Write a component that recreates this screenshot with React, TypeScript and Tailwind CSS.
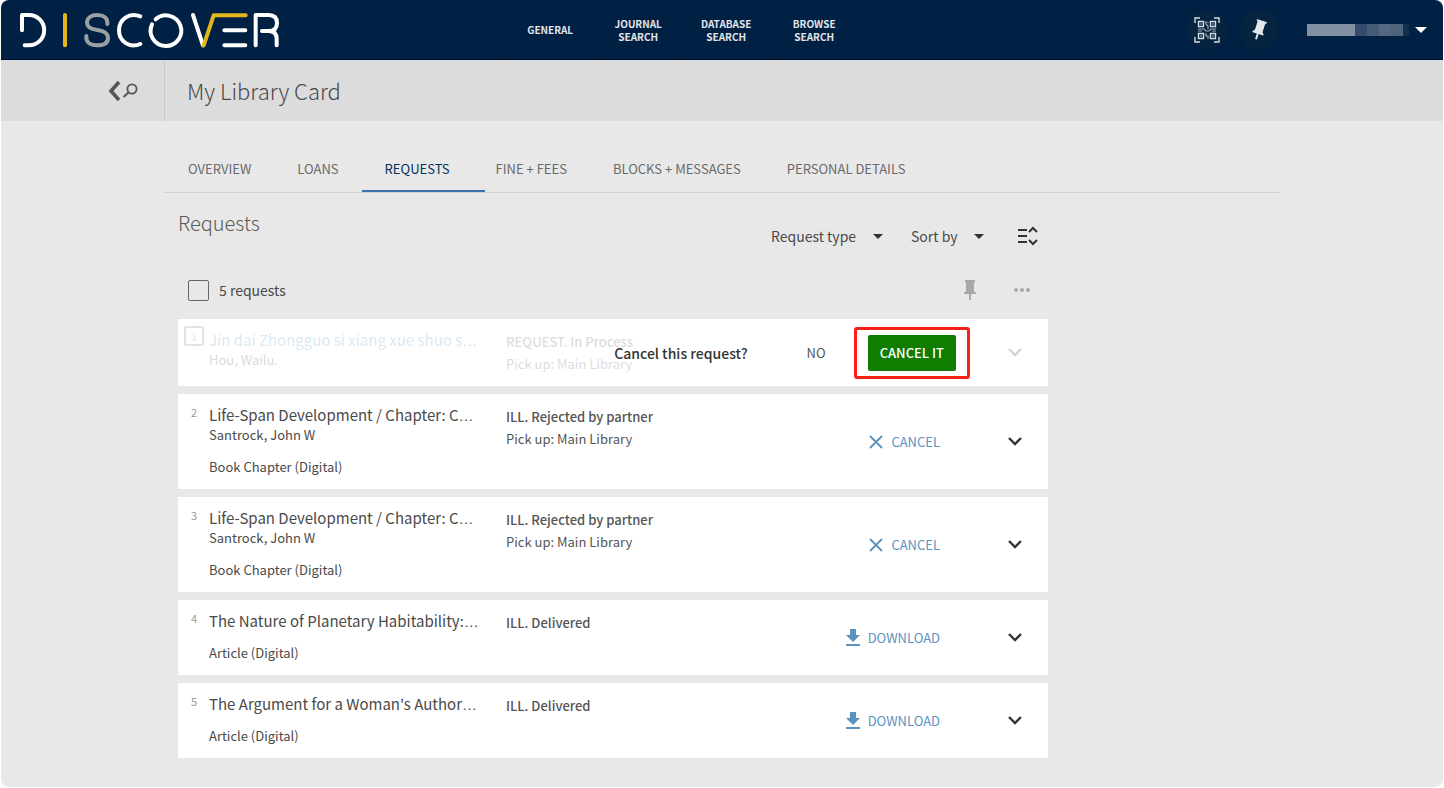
import React from 'react';

interface LibraryRequest {
  id: number;
  title: string;
  author?: string;
  type?: string;
  status: string;
  pickup?: string;
  action: 'cancel' | 'download' | 'confirm';
}

const navItems = [['General'], ['Journal', 'Search'], ['Database', 'Search'], ['Browse', 'Search']];

const tabs = ['Overview', 'Loans', 'Requests', 'Fine + Fees', 'Blocks + Messages', 'Personal Details'];

const requests: LibraryRequest[] = [
  { id: 1, title: 'Jin dai Zhongguo si xiang xue shuo s', author: 'Hou, Wailu.', status: 'REQUEST. In Process', pickup: 'Pick up: Main Library', action: 'confirm' },
  { id: 2, title: 'Life-Span Development / Chapter: C', author: 'Santrock, John W', type: 'Book Chapter (Digital)', status: 'ILL. Rejected by partner', pickup: 'Pick up: Main Library', action: 'cancel' },
  { id: 3, title: 'Life-Span Development / Chapter: C', author: 'Santrock, John W', type: 'Book Chapter (Digital)', status: 'ILL. Rejected by partner', pickup: 'Pick up: Main Library', action: 'cancel' },
  { id: 4, title: 'The Nature of Planetary Habitability:', type: 'Article (Digital)', status: 'ILL. Delivered', action: 'download' },
  { id: 5, title: "The Argument for a Woman's Author", type: 'Article (Digital)', status: 'ILL. Delivered', action: 'download' },
];

const Logo = () => (
  <svg width="264" height="40" viewBox="54 30 792 120" fill="none" stroke="#fff" strokeWidth="12" strokeLinecap="round" strokeLinejoin="round" role="img" aria-label="Discover">
    <path d="M66 91V45H87a45.5 45.5 0 0 1 0 91H74" />
    <path d="M195 45V136" stroke="#e3b71c" />
    <path d="M322 72V68c0-14-11-23-30-23s-31 9-31 23c0 13 9 19 31 22s32 9 32 23c0 15-12 23-32 23s-33-9-33-23v-5" stroke="#9b9fa6" />
    <path d="M421 49C387 35 357 59 357 91s30 55 64 41" />
    <path d="M467 58a46 46 0 1 1-11 15" />
    <path d="M579 45L609 136" />
    <path d="M673 91H736M673 136H736" />
    <path d="M611 136L641 46H737" stroke="#e3b71c" />
    <path d="M767 136V45H806q25 0 25 24t-25 24H786M806 93q24 0 24 24V136" />
  </svg>
);

const QrIcon = () => (
  <svg width="26" height="26" viewBox="0 0 26 26" fill="none" stroke="#d5dae0" strokeWidth="1.4" aria-hidden="true">
    <path d="M1 6V1H6M20 1H25V6M25 20V25H20M6 25H1V20" />
    <path d="M4.500 4.500h5v5h-5zM16.500 4.500h5v5h-5zM4.500 16.500h5v5h-5zM16.500 16.500h5v5h-5z" />
    <path d="M6.500 7h1M18.500 7h1M6.500 19h1M18.500 19h1" />
    <path d="M12 4v3l2 2v3M4 12h6l2 2h3l2-2h5M4 14h4M12 16v3h2v3M18 14h4M14 5v1" stroke="#9eaab8" strokeWidth="1.2" />
  </svg>
);

const PinIcon = ({ className }: { className: string }) => (
  <svg width="12" height="20" viewBox="0 0 12 20" fill="currentColor" className={className} aria-hidden="true">
    <path d="M1 0H11V2H10V11L12 13V14H7V20H5V14H0V13L2 11V2H1Z" />
  </svg>
);

const Caret = ({ className }: { className: string }) => (
  <svg width="10" height="5" viewBox="0 0 10 5" fill="currentColor" className={className} aria-hidden="true">
    <path d="M0 0H10L5 5Z" />
  </svg>
);

const Chevron = () => (
  <svg width="14" height="9" viewBox="0 0 14 9" fill="none" stroke="currentColor" strokeWidth="2.4" aria-hidden="true">
    <path d="M1 1L7 7L13 1" />
  </svg>
);

const Header = () => (
  <header className="flex h-[60px] items-stretch border-b border-[#000f2b] bg-[#002044] text-white">
    <div className="flex w-[35%] items-center pl-[17px]">
      <a href="#home"><Logo /></a>
    </div>
    <nav className="flex">
      {navItems.map((words) => (
        <a key={words[0]} href="#nav" className="flex w-22 flex-col items-center justify-center border-l border-[#001c3c] text-[10px] leading-[13px] font-bold uppercase text-[#e2e5e9]">
          {words.map((word) => <span key={word}>{word}</span>)}
        </a>
      ))}
    </nav>
    <div className="ml-auto flex items-center pr-4">
      <button aria-label="Scan QR code" className="flex size-10 items-center justify-center rounded-full bg-[#06243f]">
        <QrIcon />
      </button>
      <button aria-label="Saved items" className="ml-3 flex size-10 items-center justify-center rounded-full bg-[#06243f]">
        <PinIcon className="rotate-[18deg] text-[#e4e7ea]" />
      </button>
      <button aria-label="Account menu" className="ml-7 flex items-center gap-1.5">
        <span className="flex h-3">
          <span className="w-12 bg-[#8190a3]" />
          <span className="w-3 bg-[#344d6c]" />
          <span className="w-3 bg-[#465b76]" />
          <span className="w-3 bg-[#56687f]" />
          <span className="w-3 bg-[#4f637c]" />
          <span className="w-1.5 bg-[#122f50]" />
        </span>
        <Caret className="h-1.5 w-3 text-white" />
      </button>
    </div>
  </header>
);

const TitleBar = () => (
  <div className="flex h-[61px] bg-[#dcdcdc]">
    <div className="flex w-[164px] items-center justify-end border-r border-[#c8c8c8] pr-[26px]">
      <button aria-label="Back to search" className="text-[#555]">
        <svg width="30" height="20" viewBox="0 0 30 20" fill="none" stroke="currentColor" aria-hidden="true">
          <path d="M11 1L3 10L11 19" strokeWidth="3.6" />
          <circle cx="24" cy="8" r="4.6" strokeWidth="1.8" />
          <path d="M20.500 11.500L15.500 16" strokeWidth="2" />
        </svg>
      </button>
    </div>
    <h1 className="flex items-center pl-[22px] text-[22px] font-light text-[#4a4a4a]">My Library Card</h1>
  </div>
);

const RowAction = ({ action }: { action: 'cancel' | 'download' }) => (
  <button className="flex items-center gap-2 text-[13px] leading-5 text-[#5c92be] uppercase">
    {action === 'cancel' ? (
      <svg width="14" height="14" viewBox="0 0 14 14" fill="none" stroke="currentColor" strokeWidth="1.8" aria-hidden="true">
        <path d="M1 1L13 13M13 1L1 13" />
      </svg>
    ) : (
      <svg width="14" height="18" viewBox="0 0 14 18" fill="currentColor" aria-hidden="true">
        <path d="M4 0H10V6H14L7 13L0 6H4ZM0 15H14V17H0Z" />
      </svg>
    )}
    {action}
  </button>
);

const CancelConfirm = () => (
  <div className="absolute inset-y-0 right-[78px] flex items-center">
    <span className="text-sm font-medium text-[#333]">Cancel this request?</span>
    <button className="ml-[59px] text-[13px] text-[#555]">NO</button>
    <div className="ml-7 rounded-[3px] border-3 border-[#fb2116] px-[11px] py-[5px]">
      <button className="h-9 rounded-xs bg-[#107c00] px-3 text-[13px] font-medium text-white">CANCEL IT</button>
    </div>
  </div>
);

const RequestRow = ({ request }: { request: LibraryRequest }) => {
  const faded = request.action === 'confirm';
  return (
    <li className="relative flex bg-white text-[13px] text-[#4a4a4a]">
      <div className={faded ? 'flex min-w-0 flex-1 opacity-20' : 'flex min-w-0 flex-1'}>
        <div className={faded ? 'w-[31px] shrink-0 pl-1.5 pt-[7px]' : 'w-[31px] shrink-0 pl-[13px] pt-2.5'}>
          {faded ? (
            <label className="relative flex size-5 items-center justify-center text-[11px] leading-4 text-[#999]">
              <input type="checkbox" aria-label="Select request 1" className="absolute inset-0 appearance-none rounded-xs border-2 border-[#777]" />
              {request.id}
            </label>
          ) : (
            <span className="block text-[11px] leading-4 text-[#999]">{request.id}</span>
          )}
        </div>
        <div className={faded ? 'w-[297px] shrink-0 pt-2.5 pb-4' : 'w-[297px] shrink-0 pt-2.5 pb-3'}>
          <h3 className={faded ? 'h-[21px] text-[15px] leading-[21px] whitespace-nowrap text-[#4a92cc]' : 'h-[21px] text-[15px] leading-[21px] whitespace-nowrap'}>
            {request.title}<span className="font-['Liberation_Sans'] text-[#4a4a4a]">…</span>
          </h3>
          {request.author && <p className="leading-5">{request.author}</p>}
          {request.type && <p className="mt-3 leading-5">{request.type}</p>}
        </div>
        <div className="pt-3 leading-[22px] text-[#555]">
          <p className="font-medium">{request.status}</p>
          {request.pickup && <p>{request.pickup}</p>}
        </div>
      </div>
      {request.action === 'confirm' ? <CancelConfirm /> : <RowAction action={request.action} />}
      <button aria-label="Expand request" className={faded ? 'ml-[68px] mr-[26px] text-[#d3d3d3]' : 'ml-[68px] mr-[26px] text-[#333]'}>
        <Chevron />
      </button>
    </li>
  );
};

const FilterSelect = ({ label }: { label: string }) => (
  <div className="relative flex items-center">
    <select aria-label={label} className="appearance-none bg-transparent pr-[26px] text-sm leading-6 text-[#4a4a4a]">
      <option>{label}</option>
    </select>
    <Caret className="pointer-events-none absolute right-0 text-[#333]" />
  </div>
);

export default function App() {
  return (
    <div className="min-h-screen bg-white px-px pb-px font-['Noto_Sans_CJK_SC',sans-serif] flex flex-col">
      <div className="flex-1 overflow-hidden rounded-lg bg-[#e8e8e8]">
        <Header />
        <TitleBar />
        <main className="ml-[162px] max-w-[1118px]">
          <nav className="flex h-[72px] items-stretch border-b border-[#d2d2d2] pl-0.5">
            {tabs.map((tab) => (
              <a
                key={tab}
                href="#tab"
                className={
                  tab === 'Requests'
                    ? "relative flex items-center px-[23px] pt-6 text-[13px] uppercase text-[#00305c] after:absolute after:-right-3 after:bottom-0 after:left-0 after:h-0.5 after:bg-[#3a74a8] after:content-['']"
                    : 'flex items-center px-[23px] pt-6 text-[13px] uppercase text-[#6a6a6a]'
                }
              >
                {tab}
              </a>
            ))}
          </nav>

          <section className="ml-[15px] max-w-[870px]">
            <div className="flex h-[66px] items-start justify-between">
              <h2 className="pt-3.5 text-[20px] leading-8 font-light text-[#5a5a5a]">Requests</h2>
              <div className="mr-2.5 flex items-center gap-7 pt-[31px]">
                <FilterSelect label="Request type" />
                <FilterSelect label="Sort by" />
                <button aria-label="Expand all" className="ml-1.5 text-[#333]">
                  <svg width="20" height="20" viewBox="0 0 20 20" fill="none" stroke="currentColor" strokeWidth="2" aria-hidden="true">
                    <path d="M0 4H9M0 10H9M0 16H9M11 6L15 2L19 6M11 14L15 18L19 14" />
                  </svg>
                </button>
              </div>
            </div>

            <div className="flex h-[60px] items-center pt-0.5 pl-2.5">
              <label className="flex items-center gap-2.5 text-sm text-[#4a4a4a]">
                <input type="checkbox" className="size-[21px] appearance-none rounded-xs border border-[#666]" />
                5 requests
              </label>
              <button aria-label="Save selected" className="ml-auto mr-[38px]"><PinIcon className="text-[#a8a8a8]" /></button>
              <button aria-label="More actions" className="mr-[18px] text-[#a8a8a8]">
                <svg width="16" height="4" viewBox="0 0 16 4" fill="currentColor" aria-hidden="true">
                  <circle cx="2" cy="2" r="2" />
                  <circle cx="8" cy="2" r="2" />
                  <circle cx="14" cy="2" r="2" />
                </svg>
              </button>
            </div>

            <ul className="flex flex-col gap-2">
              {requests.map((request) => <RequestRow key={request.id} request={request} />)}
            </ul>
          </section>
        </main>
      </div>
    </div>
  );
}
